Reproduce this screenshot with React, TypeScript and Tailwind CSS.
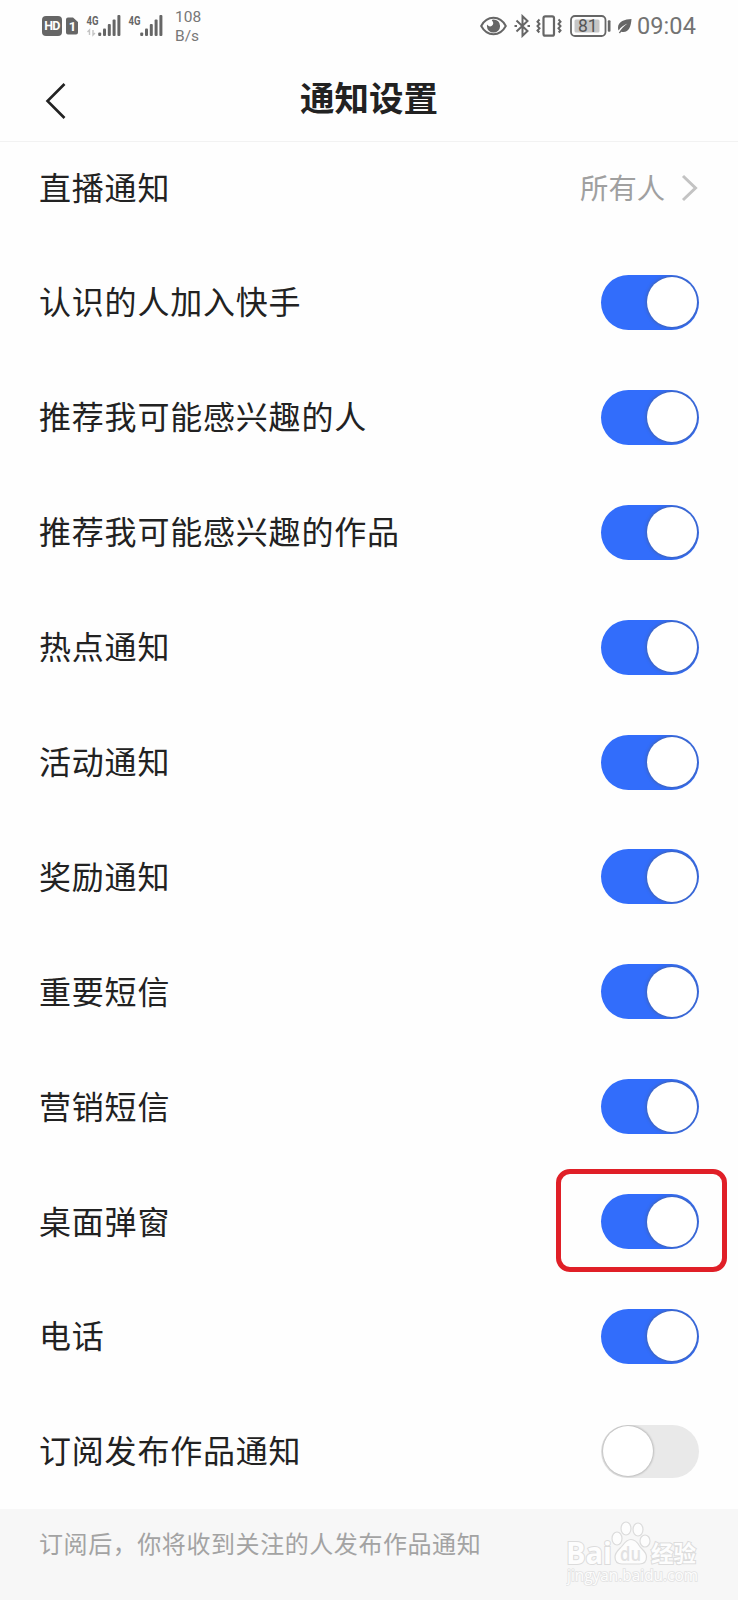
import {FC, useState} from "react";

interface NoticeItem {
    name: string
    checked: boolean
    marked?: boolean
}

const noticeList: NoticeItem[] = [
    {name: '认识的人加入快手', checked: true},
    {name: '推荐我可能感兴趣的人', checked: true},
    {name: '推荐我可能感兴趣的作品', checked: true},
    {name: '热点通知', checked: true},
    {name: '活动通知', checked: true},
    {name: '奖励通知', checked: true},
    {name: '重要短信', checked: true},
    {name: '营销短信', checked: true},
    {name: '桌面弹窗', checked: true, marked: true},
    {name: '电话', checked: true},
    {name: '订阅发布作品通知', checked: false},
]

const Signal: FC<{ weak?: boolean }> = ({weak}) => {
    return (
        <svg width="36" height="24" viewBox="0 0 36 24" fill="#666">
            <text x="0.5" y="10.6" fontSize="13" fontWeight="700" fontFamily="Roboto" textLength="12" lengthAdjust="spacingAndGlyphs">4G</text>
            {weak && (
                <path d="M3.5 21V16l-2 2M7 16v5l2-2" stroke="#c4c4c4" strokeWidth="1.4" fill="none"/>
            )}
            <rect x="12.2" y="18.6" width="3" height="3.4" rx="1"/>
            <rect x="17" y="14.4" width="3" height="7.6" rx="1"/>
            <rect x="21.8" y="10" width="3" height="12" rx="1"/>
            <rect x="26.6" y="5.6" width="3" height="16.4" rx="1"/>
            <rect x="31.4" y="1" width="3" height="21" rx="1"/>
        </svg>
    )
}

const StatusBar: FC = () => {
    return (
        <div className="flex h-[52px] items-center justify-between pl-[42px] pr-[42px] font-['Roboto','Noto_Sans_CJK_SC',sans-serif] text-[#666]">
            <div className="flex items-center">
                <div className="flex h-[20px] w-[20px] items-center justify-center rounded-[4px] bg-[#666] text-[12.5px] font-bold tracking-[-0.6px] text-white">HD</div>
                <svg className="ml-[4px]" width="12" height="18" viewBox="0 0 12 18">
                    <path d="M2 0.5h5L12 5v10.5a2 2 0 0 1-2 2H2a2 2 0 0 1-2-2v-13a2 2 0 0 1 2-2z" fill="#666"/>
                    <text x="2.7" y="14" fontSize="13" fontWeight="700" fill="#fff" fontFamily="Roboto">1</text>
                </svg>
                <div className="ml-[8px] flex gap-[6px]">
                    <Signal weak/>
                    <Signal/>
                </div>
                <div className="ml-[11px] pt-[1px] text-[15.5px] leading-[18.5px] text-[#777]">
                    <div>108</div>
                    <div>B/s</div>
                </div>
            </div>
            <div className="flex items-center">
                <svg className="-ml-[1px]" width="27" height="20" viewBox="0 0 27 20">
                    <path d="M1.2 10C4 4.8 8.5 1.8 13.5 1.8S23 4.8 25.8 10C23 15.2 18.5 18.2 13.5 18.2S4 15.2 1.2 10z" fill="none" stroke="#666" strokeWidth="2"/>
                    <path d="M13.5 3.4a6.6 6.6 0 1 1-6.6 6.6c0-.5.1-1 .2-1.4 1 1.800 3.200 2.400 4.800 1.200s1.900-3.600.2-5.100c-.3-.3-.3-.8.100-1z" fill="#666"/>
                </svg>
                <svg className="ml-[7px]" width="17" height="24" viewBox="0 0 17 24" fill="none" stroke="#666" strokeWidth="2">
                    <path d="M2.5 6.5L13.5 17 8.5 21.8V2.2L13.5 7 2.5 17.5"/>
                    <path d="M0.5 12h2.5M13.5 12h2.5"/>
                </svg>
                <svg className="ml-[5px] mr-[1px]" width="26" height="24" viewBox="0 0 26 24" fill="none" stroke="#666" strokeWidth="2.2">
                    <rect x="7.5" y="2.3" width="10.5" height="19.4" rx="1.8"/>
                    <path d="M3.5 5.5l-2 2.200 2 2.200-2 2.200 2 2.200-2 2.200 1.800 2M22.500 5.500l2 2.200-2 2.200 2 2.200-2 2.200 2 2.200-1.800 2" strokeWidth="2"/>
                </svg>
                <svg className="ml-[7px]" width="41" height="24" viewBox="0 0 41 24">
                    <rect x="1" y="2" width="34.5" height="20" rx="4" fill="none" stroke="#666" strokeWidth="1.8"/>
                    <rect x="4.5" y="5.5" width="25" height="13" rx="1.5" fill="#c6c6c6"/>
                    <rect x="37.8" y="6.2" width="2.7" height="11.6" rx="1" fill="#666"/>
                    <text x="17.8" y="18.2" fontSize="17.5" textAnchor="middle" fontFamily="Roboto" fill="#555">81</text>
                </svg>
                <svg className="ml-[6px]" width="15" height="16" viewBox="0 0 15 16">
                    <path d="M14.5 1C8 1.2 1 3.5 1 9.5c0 1.2.2 2.2.6 3C4 9 7 6.8 10.5 5.5 7 8 3.8 11.2 1.8 15l1.4.3.8-1.6C11.5 15.5 14 9 14.5 1z" fill="#666"/>
                </svg>
                <div className="ml-[5px] pt-[2px] text-[23.5px] leading-none tracking-[0.1px] text-[#737373]">09:04</div>
            </div>
        </div>
    )
}

const Switch: FC<{ checked: boolean, onChange: () => void }> = ({checked, onChange}) => {
    return (
        <button
            role="switch"
            aria-checked={checked}
            onClick={onChange}
            className={checked
                ? "flex h-[55px] w-[98.5px] items-center justify-end overflow-hidden rounded-full bg-[#326dfb] px-[2.5px]"
                : "flex h-[53.5px] w-[98px] items-center overflow-hidden rounded-full bg-[#e9e9e9] px-[2px]"}
        >
            <span
                className={checked
                    ? "h-[50px] w-[50px] rounded-full bg-white shadow-[0_0_3px_1px_rgba(80,90,110,0.5)]"
                    : "h-[50px] w-[50px] rounded-full bg-white shadow-[0_0_2px_1px_rgba(0,0,0,0.2)]"}
            />
        </button>
    )
}

const Watermark: FC = () => {
    return (
        <svg width="134" height="66" viewBox="0 0 134 66" fill="#fdfdfd" stroke="#dcdcdc" strokeWidth="1.2">
            <g paintOrder="stroke" strokeWidth="2">
                <text x="0" y="42.5" fontSize="29.5" fontWeight="700" fontFamily="Open Sans" textLength="46" lengthAdjust="spacingAndGlyphs">Bai</text>
                <text x="85" y="41" fontSize="23" fontWeight="700" fontFamily="Noto Sans CJK SC" textLength="45" lengthAdjust="spacingAndGlyphs">经验</text>
                <text x="1" y="60" fontSize="15.5" fontFamily="Open Sans" strokeWidth="1.6" stroke="#e2e2e2" textLength="131" lengthAdjust="spacingAndGlyphs">jingyan.baidu.com</text>
            </g>
            <ellipse cx="51" cy="17.5" rx="5" ry="6.5"/>
            <ellipse cx="60" cy="7.5" rx="5" ry="6.5"/>
            <ellipse cx="72" cy="8.5" rx="5" ry="6.5"/>
            <ellipse cx="79" cy="20" rx="5" ry="6"/>
            <path d="M65 18.5c4 0 6.5 3 8.5 6.5s7 5.5 7 11c0 5-3 7-7 7H56c-4 0-7-2-7-7 0-5.5 5-8 7.500-11.500S61 18.500 65 18.500z"/>
            <text x="54" y="40" fontSize="19" fontFamily="Open Sans" fontWeight="600" fill="#e2e2e2" stroke="none" textLength="21" lengthAdjust="spacingAndGlyphs">du</text>
        </svg>
    )
}

const App: FC = () => {
    const [list, setList] = useState<NoticeItem[]>(noticeList);

    const toggle = (name: string) => {
        setList(list.map(item => item.name === name ? {...item, checked: !item.checked} : item))
    }

    return (
        <div className="flex h-[1600px] w-[738px] flex-col overflow-hidden bg-[#fefefe] font-['Noto_Sans_CJK_SC',sans-serif] text-[#222]">
            <StatusBar/>
            <div className="grid h-[90px] shrink-0 grid-cols-[60px_1fr_60px] items-center border-b border-[#f2f2f2] px-[40px]">
                <svg className="mt-[6px]" width="30" height="38" viewBox="0 0 30 38" fill="none" stroke="#222" strokeWidth="2.6">
                    <path d="M24.5 3L7.5 20l17 17"/>
                </svg>
                <h1 className="text-center text-[34.5px] font-bold leading-none">通知设置</h1>
            </div>
            <div className="flex h-[103px] shrink-0 items-center justify-between pb-[11px] pl-[39px] pr-[40px]">
                <span className="pb-[4px] text-[32px] leading-none tracking-[0.8px]">直播通知</span>
                <div className="flex items-center gap-[16px]">
                    <span className="pb-[2px] text-[28.3px] leading-none text-[#a0a0a0]">所有人</span>
                    <svg width="17" height="28" viewBox="0 0 17 28" fill="none" stroke="#c3c3c3" strokeWidth="3">
                        <path d="M2 2l12.5 12L2 26"/>
                    </svg>
                </div>
            </div>
            {list.map(item => (
                <div key={item.name} className="relative flex h-[114.9px] shrink-0 items-center justify-between pl-[39px] pr-[39px]">
                    <span className="pb-[4px] text-[32px] leading-none tracking-[0.8px]">{item.name}</span>
                    <Switch checked={item.checked} onChange={() => toggle(item.name)}/>
                    {item.marked && (
                        <div className="pointer-events-none absolute right-[11px] top-[5px] h-[103px] w-[171px] rounded-[14px] border-[5px] border-[#e01f27]"/>
                    )}
                </div>
            ))}
            <div className="flex grow items-start justify-between bg-[#f7f7f7] pl-[39px] pr-[38px]">
                <p className="pt-[21px] text-[24px] leading-[25px] tracking-[0.57px] text-[#a3a3a3]">订阅后，你将收到关注的人发布作品通知</p>
                <div className="pt-[12px]">
                    <Watermark/>
                </div>
            </div>
        </div>
    )
}

export default App;
